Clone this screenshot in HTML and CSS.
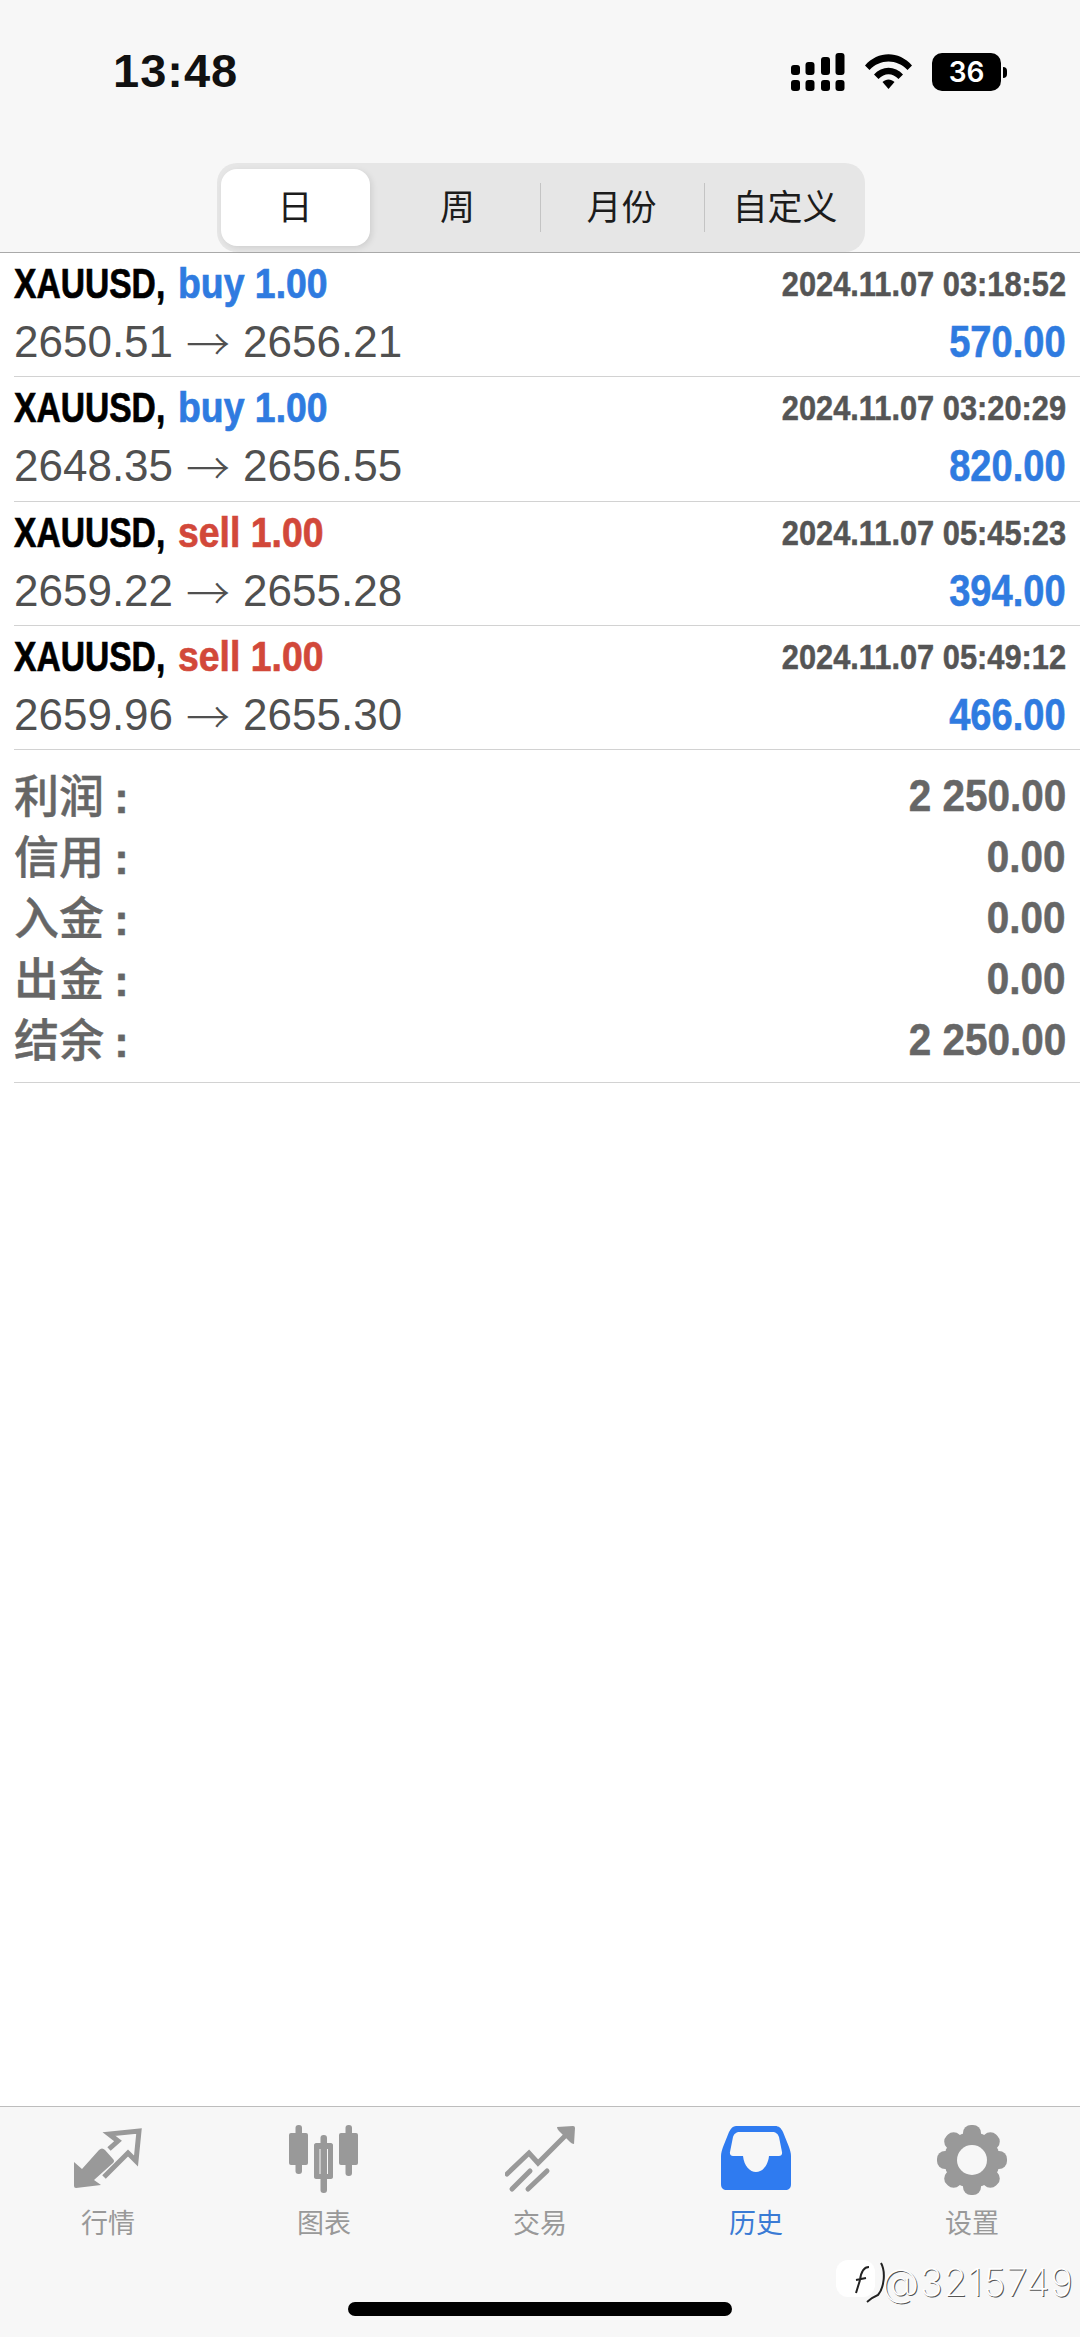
FILE: index.html
```html
<!DOCTYPE html>
<html lang="zh">
<head>
    <meta charset="UTF-8">
    <meta name="viewport" content="width=device-width, initial-scale=1.0">
    <title>历史</title>
    <link rel="stylesheet" href="styles.css">
</head>
<body>
    <header class="top">
        <div class="status-bar">
            <span class="time">13:48</span>
            <div class="status-icons">
                <svg class="signal" width="54" height="38" viewBox="0 0 54 38">
                    <rect x="0" y="12" width="9" height="10" rx="3"/>
                    <rect x="14.5" y="9" width="9" height="13" rx="3"/>
                    <rect x="30" y="4" width="9" height="18" rx="3"/>
                    <rect x="44.5" y="0" width="9" height="22" rx="3"/>
                    <rect x="0" y="27" width="9" height="11" rx="3"/>
                    <rect x="14.5" y="27" width="9" height="11" rx="3"/>
                    <rect x="30" y="27" width="9" height="11" rx="3"/>
                    <rect x="44.5" y="27" width="9" height="11" rx="3"/>
                </svg>
                <svg class="wifi" width="47" height="35" viewBox="0 0 47 35">
                    <path d="M0 11.500C13 -3.500 34 -3.500 47 11.500L42.500 16C32 4.500 15 4.500 4.500 16Z"/>
                    <path d="M9 20.500C17 11.500 30 11.500 38 20.500L33.500 25C27.500 18.500 19.500 18.500 13.500 25Z"/>
                    <path d="M17.500 28C21 24.500 26 24.500 29.500 28L23.500 35Z"/>
                </svg>
                <div class="battery">
                    <span class="battery-body">36</span>
                    <span class="battery-nub"></span>
                </div>
            </div>
        </div>
        <div class="tabs-wrap">
            <div class="tabs">
                <div class="tab active">日</div>
                <div class="tab nudge">周</div>
                <div class="tab divided">月份</div>
                <div class="tab divided nudge">自定义</div>
            </div>
        </div>
    </header>

    <main>
        <div class="deal">
            <div class="deal-line">
                <span class="deal-name"><span class="symbol">XAUUSD,</span><span class="side buy">buy 1.00</span></span>
                <span class="deal-time">2024.11.07 03:18:52</span>
            </div>
            <div class="deal-line">
                <span class="deal-price">2650.51<span class="arrow">→</span>2656.21</span>
                <span class="deal-profit">570.00</span>
            </div>
        </div>
        <div class="deal">
            <div class="deal-line">
                <span class="deal-name"><span class="symbol">XAUUSD,</span><span class="side buy">buy 1.00</span></span>
                <span class="deal-time">2024.11.07 03:20:29</span>
            </div>
            <div class="deal-line">
                <span class="deal-price">2648.35<span class="arrow">→</span>2656.55</span>
                <span class="deal-profit">820.00</span>
            </div>
        </div>
        <div class="deal">
            <div class="deal-line">
                <span class="deal-name"><span class="symbol">XAUUSD,</span><span class="side sell">sell 1.00</span></span>
                <span class="deal-time">2024.11.07 05:45:23</span>
            </div>
            <div class="deal-line">
                <span class="deal-price">2659.22<span class="arrow">→</span>2655.28</span>
                <span class="deal-profit">394.00</span>
            </div>
        </div>
        <div class="deal">
            <div class="deal-line">
                <span class="deal-name"><span class="symbol">XAUUSD,</span><span class="side sell">sell 1.00</span></span>
                <span class="deal-time">2024.11.07 05:49:12</span>
            </div>
            <div class="deal-line">
                <span class="deal-price">2659.96<span class="arrow">→</span>2655.30</span>
                <span class="deal-profit">466.00</span>
            </div>
        </div>

        <div class="summary">
            <div class="summary-row"><span class="summary-label">利润<span class="colon">:</span></span><span class="summary-value">2 250.00</span></div>
            <div class="summary-row"><span class="summary-label">信用<span class="colon">:</span></span><span class="summary-value">0.00</span></div>
            <div class="summary-row"><span class="summary-label">入金<span class="colon">:</span></span><span class="summary-value">0.00</span></div>
            <div class="summary-row"><span class="summary-label">出金<span class="colon">:</span></span><span class="summary-value">0.00</span></div>
            <div class="summary-row"><span class="summary-label">结余<span class="colon">:</span></span><span class="summary-value">2 250.00</span></div>
        </div>
    </main>

    <footer class="tabbar">
        <div class="nav-items">
            <div class="nav-item">
                <svg class="nav-icon" width="70" height="70" viewBox="0 0 70 70">
                    <path d="M1 37L9 44L26 25Q29 22 32 25L40 34Q42 36 40 38L21 55L28 60L3 63Q1 63 1 61Z"/>
                    <path class="line square" d="M36 24L45 16L36 9L66 6L63 36L55 28L31 52"/>
                </svg>
                <span>行情</span>
            </div>
            <div class="nav-item">
                <svg class="nav-icon" width="70" height="70" viewBox="0 0 70 70">
                    <rect x="6.500" y="0" width="6.500" height="49" rx="3"/>
                    <rect x="0" y="8" width="19" height="32" rx="2"/>
                    <rect x="31.500" y="10" width="6.500" height="58" rx="3"/>
                    <path fill-rule="evenodd" d="M27 18H42C43 18 44 19 44 20V52C44 53 43 54 42 54H27C26 54 25 53 25 52V20C25 19 26 18 27 18ZM30.500 24V49H39V24Z"/>
                    <rect x="56.500" y="0" width="6.500" height="51" rx="3"/>
                    <rect x="50" y="8" width="19" height="32" rx="2"/>
                </svg>
                <span>图表</span>
            </div>
            <div class="nav-item">
                <svg class="nav-icon" width="70" height="70" viewBox="0 0 70 70">
                    <path class="line" d="M2 49L24 28L33 38L62 9"/>
                    <path class="line" d="M7 64L25 46"/>
                    <path class="line" d="M23 64L42 46"/>
                    <path d="M52 2L68 1Q70 1 70 3L69 19Q67 19 65 17L54 6Q52 4 52 2Z"/>
                </svg>
                <span>交易</span>
            </div>
            <div class="nav-item active">
                <svg class="nav-icon" width="70" height="70" viewBox="0 0 70 70">
                    <path fill-rule="evenodd" d="M15 1H54C58 1 60 3 62 7L68 22C69 25 70 28 70 31V59C70 63 68 65 64 65H6C2 65 0 63 0 59V31C0 28 1 25 2 22L8 7C10 3 12 1 15 1ZM19 7C15 7 13 9 12 12L9 27C8.500 30 10 31 12 31H22C23 41 29 47 35 47C41 47 47 41 48 31H58C60 31 61.500 30 61 27L58 12C57 9 55 7 51 7Z"/>
                </svg>
                <span>历史</span>
            </div>
            <div class="nav-item">
                <svg class="nav-icon gear" width="70" height="70" viewBox="0 0 70 70">
                    <g>
                        <circle cx="35" cy="35" r="28"/>
                        <rect x="26" y="0" width="18" height="70" rx="8"/>
                        <rect x="26" y="0" width="18" height="70" rx="8" transform="rotate(45 35 35)"/>
                        <rect x="26" y="0" width="18" height="70" rx="8" transform="rotate(90 35 35)"/>
                        <rect x="26" y="0" width="18" height="70" rx="8" transform="rotate(135 35 35)"/>
                    </g>
                    <circle class="hole" cx="35" cy="35" r="15"/>
                </svg>
                <span>设置</span>
            </div>
        </div>
        <div class="home-bar"></div>
        <!-- watermark sits over the tab bar -->
        <div class="watermark">
            <svg class="wm-logo" width="52" height="44" viewBox="0 0 52 44">
                <rect x="0" y="0" width="39" height="37" rx="12"/>
                <path d="M33 7C27 7 25 12 24 20L20 33M20 20L30 18M45 3C50 12 48 28 42 35L36 38L31 42"/>
            </svg>
            <span>@3215749</span>
        </div>
    </footer>
</body>
</html>
```

FILE: styles.css
```css
* {
    margin: 0;
    padding: 0;
    box-sizing: border-box;
}

body {
    width: 1080px;
    height: 2337px;
    background: white;
    display: flex;
    flex-direction: column;
    font-family: 'Liberation Sans', 'Noto Sans CJK SC', sans-serif;
    overflow: hidden;
}

.top {
    height: 253px;
    background: #f7f7f7;
    border-bottom: 1px solid #a9a9a9;
}

.status-bar {
    height: 163px;
    padding: 53px 73px 0 113px;
    display: flex;
    justify-content: space-between;
    align-items: flex-start;
}

.time {
    font-size: 47px;
    font-weight: 700;
    line-height: 36px;
    letter-spacing: 1px;
    color: #111;
}

.status-icons {
    display: flex;
    align-items: flex-start;
    gap: 20px;
}

.status-icons svg {
    display: block;
}

.battery {
    display: flex;
    align-items: center;
    gap: 2px;
}

.battery-body {
    width: 69px;
    height: 38px;
    background: black;
    color: white;
    border-radius: 10px;
    font-family: 'Inter', sans-serif;
    font-size: 28px;
    font-weight: 600;
    line-height: 38px;
    text-align: center;
}

.battery-nub {
    width: 4px;
    height: 11px;
    background: black;
    border-radius: 0 4px 4px 0;
}

.wifi {
    margin-top: 1px;
}

.tabs-wrap {
    display: flex;
    justify-content: center;
}

.tabs {
    width: 648px;
    height: 89px;
    margin-left: 1px;
    padding: 6px 4px;
    background: #e6e6e6;
    border-radius: 20px;
    display: grid;
    grid-template-columns: 149px 170px 164px 157px;
}

.tab {
    display: flex;
    align-items: center;
    justify-content: center;
    font-size: 35px;
    line-height: 73px;
    color: #1c1c1c;
    position: relative;
}

.tab.nudge {
    padding-left: 6px;
}

.tab.active {
    background: white;
    border-radius: 16px;
    box-shadow: 2px 2px 6px rgba(0, 0, 0, 0.1);
}

.tab.divided::before {
    content: '';
    position: absolute;
    left: 0;
    top: 14px;
    bottom: 14px;
    width: 1px;
    background: #c4c4c4;
}

main {
    flex: 1;
}

.deal {
    height: 124.300px;
    margin-left: 14px;
    padding: 2px 14px 0 0;
    border-bottom: 1px solid #d2d2d2;
}

.deal-line {
    height: 58px;
    display: flex;
    justify-content: space-between;
    align-items: center;
}

/* no narrow font installed, so the bold text is squeezed */
.deal-name {
    display: flex;
    font-size: 42px;
    font-weight: 700;
    white-space: nowrap;
    -webkit-text-stroke: 0.7px;
}

.symbol {
    display: inline-block;
    color: black;
    width: 164px;
    transform: scaleX(0.8);
    transform-origin: left center;
}

.side {
    display: inline-block;
    transform: scaleX(0.89);
    transform-origin: left center;
}

.buy {
    color: #2f7be0;
}

.sell {
    color: #d2483a;
}

.deal-time {
    font-size: 35px;
    font-weight: 700;
    color: #555;
    -webkit-text-stroke: 0.5px;
    transform: scaleX(0.88);
    transform-origin: right center;
}

.deal-price {
    display: flex;
    align-items: center;
    font-size: 44px;
    line-height: 50px;
    color: #505050;
}

.arrow {
    font-family: 'Noto Sans CJK SC', sans-serif;
    font-weight: 300;
    line-height: 50px;
    margin: 0 13px;
}

.deal-profit {
    font-size: 44px;
    font-weight: 700;
    color: #2f7be0;
    -webkit-text-stroke: 0.6px;
    transform: scaleX(0.865);
    transform-origin: right center;
}

.summary {
    margin-left: 14px;
    padding: 15px 14px 12px 0;
    border-bottom: 1px solid #d2d2d2;
}

.summary-row {
    height: 61px;
    display: flex;
    justify-content: space-between;
    align-items: center;
    color: #666;
}

.summary-label {
    font-family: 'Noto Sans CJK SC', sans-serif;
    font-size: 45px;
    font-weight: 500;
    margin-bottom: 4px;
    -webkit-text-stroke: 0.4px;
}

.colon {
    font-family: 'Liberation Sans', sans-serif;
    font-weight: 700;
    margin-left: 10px;
}

.summary-value {
    font-size: 44px;
    font-weight: 700;
    -webkit-text-stroke: 0.5px;
    transform: scaleX(0.92);
    transform-origin: right center;
}

.tabbar {
    height: 231px;
    background: #f7f7f7;
    border-top: 1px solid #bdbdbd;
    position: relative;
}

.nav-items {
    display: grid;
    grid-template-columns: repeat(5, 216px);
    padding-top: 18px;
}

.nav-item {
    display: flex;
    flex-direction: column;
    align-items: center;
    gap: 13px;
    font-size: 27px;
    line-height: 32px;
    color: #999;
}

.nav-icon {
    display: block;
    fill: #999;
}

.nav-icon .line {
    fill: none;
    stroke: #999;
    stroke-width: 5;
    stroke-linecap: round;
}

.nav-icon .line.square {
    stroke-linecap: butt;
}

.nav-icon .hole {
    fill: #f7f7f7;
}

.nav-item.active {
    color: #3a7bd5;
}

.nav-item.active .nav-icon {
    fill: #2f7bf0;
}

.home-bar {
    position: absolute;
    left: 348px;
    top: 195px;
    width: 384px;
    height: 14px;
    background: black;
    border-radius: 7px;
}

.watermark {
    position: absolute;
    left: 836px;
    top: 153px;
    display: flex;
    align-items: flex-start;
    font-family: 'Inter', sans-serif;
    font-size: 38px;
    font-weight: 200;
    line-height: 44px;
    letter-spacing: 1px;
    color: white;
    text-shadow: 1px 1px 0 #555;
    white-space: nowrap;
}

.wm-logo {
    margin-right: -6px;
    fill: white;
}

.wm-logo path {
    fill: none;
    stroke: #222;
    stroke-width: 2;
}
```
